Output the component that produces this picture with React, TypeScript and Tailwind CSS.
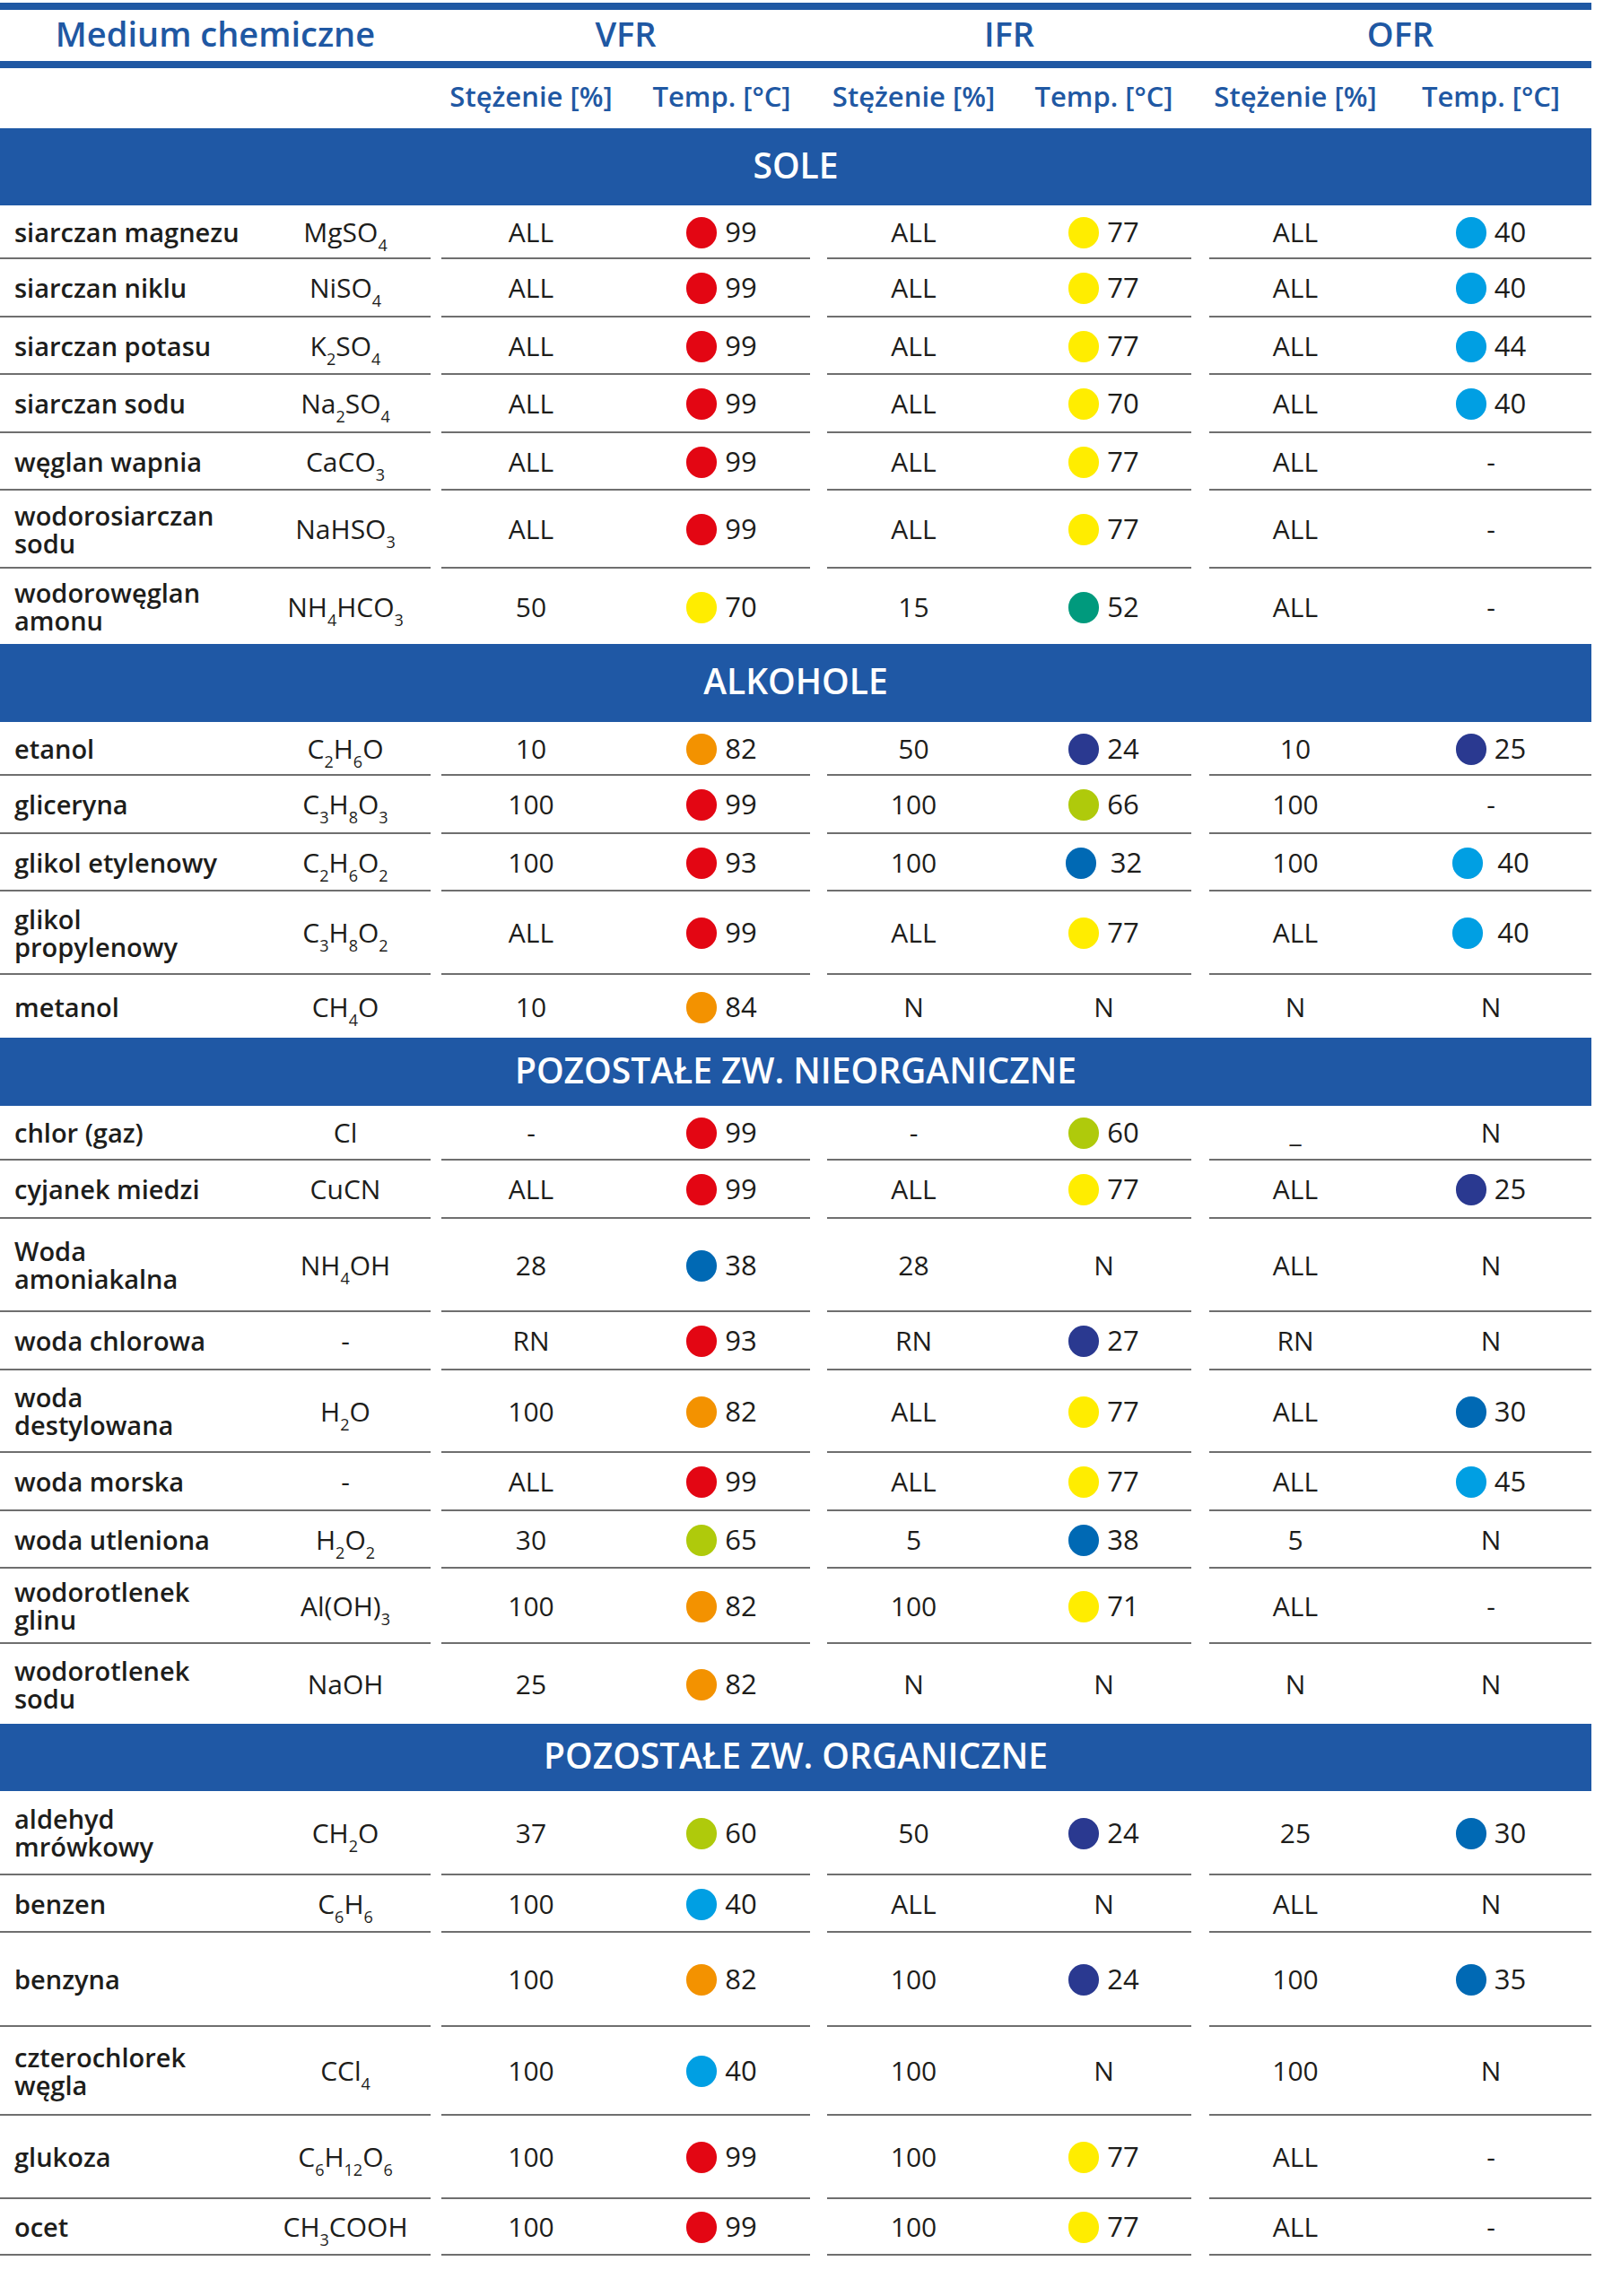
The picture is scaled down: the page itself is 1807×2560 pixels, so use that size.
import React from 'react';

// kolory kropek temperatury
const DOT: Record<string, string> = {
  red: 'bg-[#e30613]',
  yel: 'bg-[#ffed00]',
  lb: 'bg-[#009fe3]',
  teal: 'bg-[#009a7d]',
  or: 'bg-[#f39200]',
  navy: 'bg-[#2a3990]',
  blue: 'bg-[#0069b4]',
  lime: 'bg-[#afca0b]',
};

type Row = [string, string, string, string, string, string, string, string, string];

interface Section {
  title: string;
  h: string;
  rows: Row[];
}

// [nazwa, wzór, wysokość, VFR stęż., VFR temp., IFR stęż., IFR temp., OFR stęż., OFR temp.]
const sections: Section[] = [
  {
    title: 'SOLE',
    h: 'h-[86px]',
    rows: [
      ['siarczan magnezu', 'MgSO4', 'h-[60px]', 'ALL', 'red:99', 'ALL', 'yel:77', 'ALL', 'lb:40'],
      ['siarczan niklu', 'NiSO4', 'h-[65px]', 'ALL', 'red:99', 'ALL', 'yel:77', 'ALL', 'lb:40'],
      ['siarczan potasu', 'K2SO4', 'h-[64px]', 'ALL', 'red:99', 'ALL', 'yel:77', 'ALL', 'lb:44'],
      ['siarczan sodu', 'Na2SO4', 'h-[65px]', 'ALL', 'red:99', 'ALL', 'yel:70', 'ALL', 'lb:40'],
      ['węglan wapnia', 'CaCO3', 'h-[64px]', 'ALL', 'red:99', 'ALL', 'yel:77', 'ALL', '-'],
      ['wodorosiarczan\nsodu', 'NaHSO3', 'h-[87px]', 'ALL', 'red:99', 'ALL', 'yel:77', 'ALL', '-'],
      ['wodorowęglan\namonu', 'NH4HCO3', 'h-[84px]', '50', 'yel:70', '15', 'teal:52', 'ALL', '-'],
    ],
  },
  {
    title: 'ALKOHOLE',
    h: 'h-[87px]',
    rows: [
      ['etanol', 'C2H6O', 'h-[60px]', '10', 'or:82', '50', 'navy:24', '10', 'navy:25'],
      ['gliceryna', 'C3H8O3', 'h-[65px]', '100', 'red:99', '100', 'lime:66', '100', '-'],
      ['glikol etylenowy', 'C2H6O2', 'h-[64px]', '100', 'red:93', '100', 'blue:32:w', '100', 'lb:40:w'],
      ['glikol\npropylenowy', 'C3H8O2', 'h-[93px]', 'ALL', 'red:99', 'ALL', 'yel:77', 'ALL', 'lb:40:w'],
      ['metanol', 'CH4O', 'h-[70px]', '10', 'or:84', 'N', 'N', 'N', 'N'],
    ],
  },
  {
    title: 'POZOSTAŁE ZW. NIEORGANICZNE',
    h: 'h-[76px]',
    rows: [
      ['chlor (gaz)', 'Cl', 'h-[61px]', '-', 'red:99', '-', 'lime:60', '_', 'N'],
      ['cyjanek miedzi', 'CuCN', 'h-[65px]', 'ALL', 'red:99', 'ALL', 'yel:77', 'ALL', 'navy:25'],
      ['Woda\namoniakalna', 'NH4OH', 'h-[104px]', '28', 'blue:38', '28', 'N', 'ALL', 'N'],
      ['woda chlorowa', '-', 'h-[65px]', 'RN', 'red:93', 'RN', 'navy:27', 'RN', 'N'],
      ['woda\ndestylowana', 'H2O', 'h-[92px]', '100', 'or:82', 'ALL', 'yel:77', 'ALL', 'blue:30'],
      ['woda morska', '-', 'h-[65px]', 'ALL', 'red:99', 'ALL', 'yel:77', 'ALL', 'lb:45'],
      ['woda utleniona', 'H2O2', 'h-[64px]', '30', 'lime:65', '5', 'blue:38', '5', 'N'],
      ['wodorotlenek\nglinu', 'Al(OH)3', 'h-[84px]', '100', 'or:82', '100', 'yel:71', 'ALL', '-'],
      ['wodorotlenek\nsodu', 'NaOH', 'h-[89px]', '25', 'or:82', 'N', 'N', 'N', 'N'],
    ],
  },
  {
    title: 'POZOSTAŁE ZW. ORGANICZNE',
    h: 'h-[75px]',
    rows: [
      ['aldehyd\nmrówkowy', 'CH2O', 'h-[94px]', '37', 'lime:60', '50', 'navy:24', '25', 'blue:30'],
      ['benzen', 'C6H6', 'h-[64px]', '100', 'lb:40', 'ALL', 'N', 'ALL', 'N'],
      ['benzyna', '', 'h-[105px]', '100', 'or:82', '100', 'navy:24', '100', 'blue:35'],
      ['czterochlorek\nwęgla', 'CCl4', 'h-[99px]', '100', 'lb:40', '100', 'N', '100', 'N'],
      ['glukoza', 'C6H12O6', 'h-[93px]', '100', 'red:99', '100', 'yel:77', 'ALL', '-'],
      ['ocet', 'CH3COOH', 'h-[63px]', '100', 'red:99', '100', 'yel:77', 'ALL', '-'],
    ],
  },
];

function Formula({ f }: { f: string }) {
  const parts = f.split(/(\d+)/);
  return (
    <span className="whitespace-nowrap">
      {parts.map((p, i) =>
        i % 2 ? (
          <sub key={i} className="bottom-[-10px] text-[18px]">
            {p}
          </sub>
        ) : (
          <span key={i}>{p}</span>
        )
      )}
    </span>
  );
}

function Temp({ t }: { t: string }) {
  const bits = t.split(':');
  if (bits.length < 2) return <span className="text-[30px]">{t}</span>;
  const [c, v, w] = bits;
  return (
    <span className={`flex items-center ${w ? 'gap-[16px]' : 'gap-[9px]'}`}>
      <span className={`mt-[2px] h-[35px] w-[34px] rounded-full ${DOT[c]}`} />
      <span className="text-[31px] leading-none">{v}</span>
    </span>
  );
}

function DataRow({ r, line }: { r: Row; line: boolean }) {
  const [name, f, h, vc, vt, ic, it, oc, ot] = r;
  const b = line ? 'border-b-2 border-[#6f6f6f]' : '';
  const cell = 'flex items-center justify-center';
  return (
    <div className={`flex ${h}`}>
      <div className={`flex w-[480px] ${b}`}>
        <div className="flex w-[290px] items-center whitespace-pre-line pl-4 text-[29px] font-semibold leading-[31px]">
          {name}
        </div>
        <div className={`${cell} w-[190px] text-[30px]`}>
          <Formula f={f} />
        </div>
      </div>
      <div className="w-[12px]" />
      <div className={`flex w-[411px] ${b}`}>
        <div className={`${cell} w-[200px] text-[30px]`}>{vc}</div>
        <div className={`${cell} w-[211px] pl-[14px]`}>
          <Temp t={vt} />
        </div>
      </div>
      <div className="w-[19px]" />
      <div className={`flex w-[406px] ${b}`}>
        <div className={`${cell} w-[193px] text-[30px]`}>{ic}</div>
        <div className={`${cell} w-[213px] pl-[18px]`}>
          <Temp t={it} />
        </div>
      </div>
      <div className="w-[20px]" />
      <div className={`flex w-[426px] ${b}`}>
        <div className={`${cell} w-[192px] text-[30px]`}>{oc}</div>
        <div className={`${cell} w-[234px] pl-[10px]`}>
          <Temp t={ot} />
        </div>
      </div>
    </div>
  );
}

export default function App() {
  const sub = 'flex items-center justify-center';
  return (
    <div className="min-h-[2560px] bg-white font-['Open_Sans','Liberation_Sans',sans-serif] text-[#1d1d1b]">
      <div className="w-[1774px] pt-[3px]">
        {/* nagłówek */}
        <div className="flex h-[73px] border-y-8 border-[#1f58a3] pb-[4px] text-[38px] font-semibold text-[#1f58a3]">
          <div className={`${sub} w-[480px]`}>Medium chemiczne</div>
          <div className="w-[12px]" />
          <div className={`${sub} w-[411px]`}>VFR</div>
          <div className="w-[19px]" />
          <div className={`${sub} w-[406px]`}>IFR</div>
          <div className="w-[20px]" />
          <div className={`${sub} w-[426px]`}>OFR</div>
        </div>
        <div className="flex h-[67px] pb-[4px] text-[31px] font-semibold text-[#1f58a3]">
          <div className="w-[492px]" />
          <div className={`${sub} w-[200px]`}>Stężenie [%]</div>
          <div className={`${sub} w-[211px] pl-[14px]`}>Temp. [°C]</div>
          <div className="w-[19px]" />
          <div className={`${sub} w-[193px]`}>Stężenie [%]</div>
          <div className={`${sub} w-[213px] pl-[18px]`}>Temp. [°C]</div>
          <div className="w-[20px]" />
          <div className={`${sub} w-[192px]`}>Stężenie [%]</div>
          <div className={`${sub} w-[234px] pl-[10px]`}>Temp. [°C]</div>
        </div>

        {sections.map((s, si) => (
          <div key={s.title}>
            <div className={`flex ${s.h} items-center justify-center bg-[#1f58a5] pb-[4px] text-[39px] font-semibold text-white`}>
              {s.title}
            </div>
            {s.rows.map((r, ri) => (
              <DataRow
                key={r[0]}
                r={r}
                line={!(ri === s.rows.length - 1 && si < sections.length - 1)}
              />
            ))}
          </div>
        ))}
      </div>
    </div>
  );
}
